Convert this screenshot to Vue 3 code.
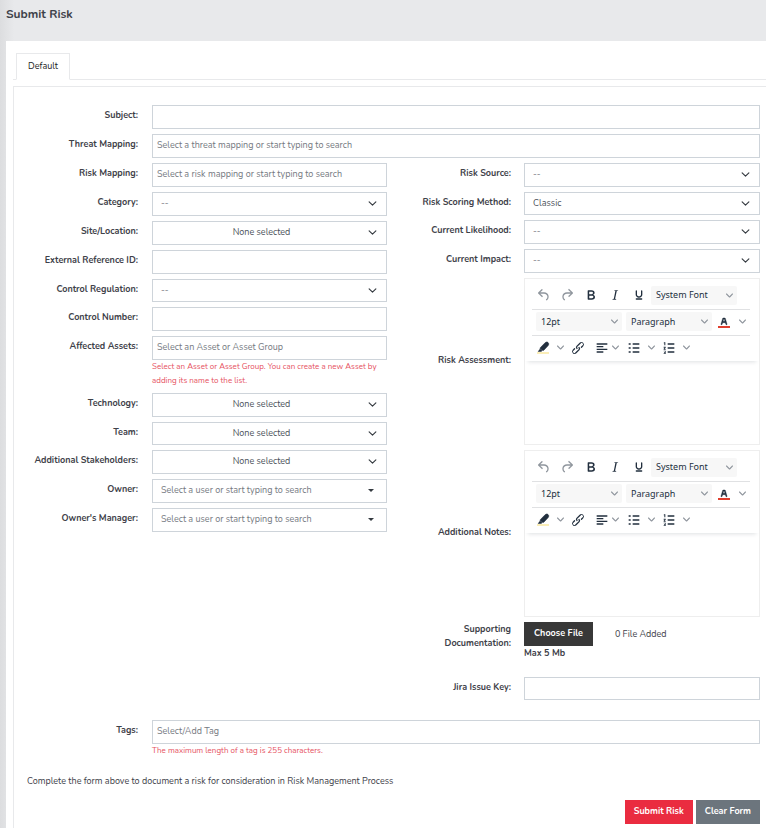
<script setup>
import { ref } from 'vue'

const leftFields = [
  { id: 'risk-mapping', label: 'Risk Mapping:', type: 'text', placeholder: 'Select a risk mapping or start typing to search' },
  { id: 'category', label: 'Category:', type: 'select', value: '--' },
  { id: 'site', label: 'Site/Location:', type: 'multi' },
  { id: 'reference', label: 'External Reference ID:', type: 'text' },
  { id: 'regulation', label: 'Control Regulation:', type: 'select', value: '--', compact: true },
  { id: 'control-number', label: 'Control Number:', type: 'text' },
  {
    id: 'assets',
    label: 'Affected Assets:',
    type: 'text',
    placeholder: 'Select an Asset or Asset Group',
    help: 'Select an Asset or Asset Group. You can create a new Asset by adding its name to the list.',
  },
  { id: 'technology', label: 'Technology:', type: 'multi' },
  { id: 'team', label: 'Team:', type: 'multi', compact: true },
  { id: 'stakeholders', label: 'Additional Stakeholders:', type: 'multi' },
  { id: 'owner', label: 'Owner:', type: 'combo', placeholder: 'Select a user or start typing to search' },
  { id: 'manager', label: "Owner's Manager:", type: 'combo', placeholder: 'Select a user or start typing to search' },
]

const rightFields = [
  { id: 'source', label: 'Risk Source:', value: '--' },
  { id: 'scoring', label: 'Risk Scoring Method:', value: 'Classic', compact: true },
  { id: 'likelihood', label: 'Current Likelihood:', value: '--' },
  { id: 'impact', label: 'Current Impact:', value: '--' },
]

const editors = [
  { id: 'assessment', label: 'Risk Assessment:' },
  { id: 'notes', label: 'Additional Notes:' },
]

const icons = {
  Undo: 'M6.4 8H12c3.7 0 6.2 2 6.8 5.1.6 2.7-.4 5.6-2.3 6.8a1 1 0 0 1-1-1.8c1.1-.6 1.8-2.7 1.4-4.6-.5-2.1-2.1-3.5-4.9-3.5H6.4l3.3 3.3a1 1 0 1 1-1.4 1.4l-5-5a1 1 0 0 1 0-1.4l5-5a1 1 0 0 1 1.4 1.4L6.4 8Z',
  Redo: 'M17.6 10H12c-2.8 0-4.4 1.4-4.9 3.5-.4 2 .3 4 1.4 4.6a1 1 0 1 1-1 1.8c-2-1.2-2.9-4.1-2.3-6.8.6-3 3-5.1 6.8-5.1h5.6l-3.3-3.3a1 1 0 1 1 1.4-1.4l5 5a1 1 0 0 1 0 1.4l-5 5a1 1 0 0 1-1.4-1.4l3.3-3.3Z',
  Bold: 'M7.8 19c-.3 0-.5 0-.6-.2l-.2-.5V5.7c0-.2 0-.4.2-.5l.6-.2h5c1.5 0 2.7.3 3.5 1 .7.6 1.1 1.4 1.1 2.5a3 3 0 0 1-.6 1.9c-.4.6-1 1-1.6 1.2.4.1.9.3 1.3.6s.8.7 1 1.2c.4.4.5 1 .5 1.6 0 1.3-.4 2.3-1.3 3-.8.7-2.1 1-3.8 1H7.8Zm5-8.3c.6 0 1.2-.1 1.6-.5.4-.3.6-.7.6-1.3 0-1.1-.8-1.7-2.3-1.7H9.3v3.5h3.4Zm.5 6c.7 0 1.3-.1 1.7-.4.4-.4.6-.9.6-1.5s-.2-1-.7-1.4c-.4-.3-1-.4-2-.4H9.4v3.8h4Z',
  Italic: 'm16.7 4.7-.1.9h-.3c-.6 0-1 0-1.4.3-.3.3-.4.6-.5 1.1l-2.1 9.8v.6c0 .5.4.8 1.4.8h.2l-.2.8H8l.2-.8h.2c1.1 0 1.8-.5 2-1.5l2-9.8.1-.5c0-.6-.4-.8-1.4-.8h-.3l.2-.9h5.8Z',
  Underline: 'M16 5c.6 0 1 .4 1 1v5.5a4 4 0 0 1-.4 1.8l-1 1.4a5.3 5.3 0 0 1-5.5 1 5 5 0 0 1-1.6-1c-.5-.4-.8-.9-1.1-1.4a4 4 0 0 1-.4-1.8V6c0-.6.4-1 1-1s1 .4 1 1v5.5c0 .3 0 .6.2 1l.6.7a3.3 3.3 0 0 0 2.2.8 3.4 3.4 0 0 0 2.2-.8c.3-.2.4-.5.6-.8l.2-.9V6c0-.6.4-1 1-1ZM8 17h8c.6 0 1 .4 1 1s-.4 1-1 1H8a1 1 0 0 1 0-2Z',
}
const basicTools = ['Undo', 'Redo', 'Bold', 'Italic', 'Underline']
const chevron = 'M8.7 2.2c.3-.3.8-.3 1 0 .4.4.4.9 0 1.2L5.7 7.8c-.3.3-.9.3-1.2 0L.2 3.4a.8.8 0 0 1 0-1.2c.3-.3.8-.3 1.1 0L5 6l3.7-3.8Z'

const fileCount = ref(0)
function onFiles(event) {
  fileCount.value = event.target.files.length
}
</script>

<template>
  <div class="page">
    <header class="page-head">
      <h1>Submit Risk</h1>
    </header>
    <main class="card">
      <nav class="tabs">
        <a class="tab" href="#default">Default</a>
      </nav>
      <form class="panel" @submit.prevent>
        <div class="row">
          <label for="subject">Subject:</label>
          <input id="subject" class="control" type="text" />
        </div>
        <div class="row">
          <label for="threat">Threat Mapping:</label>
          <input id="threat" class="control" type="text" placeholder="Select a threat mapping or start typing to search" />
        </div>

        <div class="columns">
          <div class="column">
            <div v-for="f in leftFields" :key="f.id" class="row">
              <label :for="f.id">{{ f.label }}</label>
              <div class="field">
                <input v-if="f.type === 'text'" :id="f.id" class="control" type="text" :placeholder="f.placeholder" />
                <div v-else-if="f.type === 'select'" class="picker">
                  <select :id="f.id" class="control" :class="{ compact: f.compact }">
                    <option>{{ f.value }}</option>
                  </select>
                  <svg class="arrow" viewBox="0 0 16 16"><path d="m2 5 6 6 6-6" /></svg>
                </div>
                <div v-else-if="f.type === 'multi'" class="picker">
                  <button :id="f.id" class="control multi" :class="{ compact: f.compact }" type="button">None selected</button>
                  <svg class="arrow" viewBox="0 0 16 16"><path d="m2 5 6 6 6-6" /></svg>
                </div>
                <div v-else class="picker">
                  <input :id="f.id" class="control combo" type="text" :placeholder="f.placeholder" />
                  <svg class="caret" viewBox="0 0 6 3"><path d="M0 0h6L3 3z" /></svg>
                </div>
                <p v-if="f.help" class="help">{{ f.help }}</p>
              </div>
            </div>
          </div>

          <div class="column right">
            <div v-for="f in rightFields" :key="f.id" class="row">
              <label :for="f.id">{{ f.label }}</label>
              <div class="picker">
                <select :id="f.id" class="control" :class="{ compact: f.compact }">
                  <option>{{ f.value }}</option>
                </select>
                <svg class="arrow" viewBox="0 0 16 16"><path d="m2 5 6 6 6-6" /></svg>
              </div>
            </div>

            <div v-for="e in editors" :key="e.id" class="row middle">
              <label :for="e.id">{{ e.label }}</label>
              <div class="editor">
                <div class="toolbar">
                  <div class="tools">
                    <button v-for="(name, i) in basicTools" :key="name" class="tool wide" :class="{ faded: i < 2 }" type="button" :aria-label="name">
                      <svg class="icon" viewBox="0 0 24 24"><path :d="icons[name]" /></svg>
                    </button>
                    <div class="mini">
                      <select aria-label="Font"><option>System Font</option></select>
                      <svg class="chev" viewBox="0 0 10 10"><path :d="chevron" /></svg>
                    </div>
                  </div>
                  <div class="tools spaced">
                    <div class="mini">
                      <select aria-label="Size"><option>12pt</option></select>
                      <svg class="chev" viewBox="0 0 10 10"><path :d="chevron" /></svg>
                    </div>
                    <div class="mini">
                      <select aria-label="Block"><option>Paragraph</option></select>
                      <svg class="chev" viewBox="0 0 10 10"><path :d="chevron" /></svg>
                    </div>
                    <button class="tool wide" type="button" aria-label="Text color">
                      <svg class="icon" viewBox="0 0 24 24">
                        <path d="M8.7 16h-.8a.5.5 0 0 1-.5-.6l2.7-9c.1-.3.3-.4.5-.4h2.8c.2 0 .4.1.5.4l2.7 9a.5.5 0 0 1-.5.6h-.8a.5.5 0 0 1-.4-.4l-.7-2.2c0-.3-.3-.4-.5-.4h-3.4c-.2 0-.4.1-.5.4l-.7 2.2c0 .3-.2.4-.4.4Zm2.6-7.6-.6 2a.5.5 0 0 0 .5.6h1.6a.5.5 0 0 0 .5-.6l-.6-2c0-.3-.3-.4-.5-.4h-.4c-.2 0-.4.1-.5.4Z" stroke="#222f3e" stroke-width=".6" />
                        <path d="M3 18h18v3H3z" fill="#e03e2d" />
                      </svg>
                    </button>
                    <button class="tool narrow" type="button" aria-label="Text color menu">
                      <svg class="chev" viewBox="0 0 10 10"><path :d="chevron" /></svg>
                    </button>
                  </div>
                  <div class="tools">
                    <button class="tool" type="button" aria-label="Highlight">
                      <svg class="icon" viewBox="0 0 24 24">
                        <path d="M3 18h18v3H3z" fill="#fbeeb8" />
                        <path d="M4 17.500 7.500 13l3.500 3.200-1.500 1.300Z" />
                        <path d="M8 11.500l6.500-6.700c1.700-1.700 3.500-2.300 5-1s1.300 3.200-.1 4.900l-6.200 6.500c-.6.6-1.500.6-2.100.1L8.200 13.400c-.6-.5-.7-1.300-.2-1.900Z" stroke="#222f3e" />
                      </svg>
                    </button>
                    <button class="tool narrow" type="button" aria-label="Highlight menu">
                      <svg class="chev" viewBox="0 0 10 10"><path :d="chevron" /></svg>
                    </button>
                    <button class="tool" type="button" aria-label="Link">
                      <svg class="icon" viewBox="0 0 24 24"><path d="M6.2 12.3a1 1 0 0 1 1.4 1.4l-2 2a2 2 0 1 0 2.6 2.8l4.8-4.8a1 1 0 0 0 0-1.4 1 1 0 1 1 1.4-1.3 2.9 2.9 0 0 1 0 4L9.6 20a3.9 3.9 0 0 1-5.5-5.5l2-2Zm11.6-.6a1 1 0 0 1-1.4-1.4l2-2a2 2 0 1 0-2.6-2.8L11 10.3a1 1 0 0 0 0 1.4A1 1 0 1 1 9.6 13a2.9 2.900 0 0 1 0-4L14.4 4a3.9 3.9 0 0 1 5.5 5.500l-2 2Z" /></svg>
                    </button>
                    <button class="tool align" type="button" aria-label="Align">
                      <svg class="icon" viewBox="0 0 24 24"><path d="M4 5h16v2H4zM4 9h10v2H4zM4 13h16v2H4zM4 17h10v2H4z" /></svg>
                      <svg class="chev" viewBox="0 0 10 10"><path :d="chevron" /></svg>
                    </button>
                    <button class="tool" type="button" aria-label="Bullet list">
                      <svg class="icon" viewBox="0 0 24 24"><path d="M4 5h3v2H4zM10 5h10v2H10zM4 11h3v2H4zM10 11h10v2H10zM4 17h3v2H4zM10 17h10v2H10z" /></svg>
                    </button>
                    <button class="tool narrow" type="button" aria-label="Bullet list menu">
                      <svg class="chev" viewBox="0 0 10 10"><path :d="chevron" /></svg>
                    </button>
                    <button class="tool" type="button" aria-label="Numbered list">
                      <svg class="icon" viewBox="0 0 24 24"><path d="M10 5h10v2H10zM10 11h10v2H10zM10 17h10v2H10zM5 3.500h1.500V8H5V5H4V4zM4 10h3v2l-1.500 1.500H7v1H4v-1.200l1.500-1.500H4zM4 16h3v5H4v-1h2v-1H4.500v-1H6v-1H4z" /></svg>
                    </button>
                    <button class="tool narrow" type="button" aria-label="Numbered list menu">
                      <svg class="chev" viewBox="0 0 10 10"><path :d="chevron" /></svg>
                    </button>
                  </div>
                </div>
                <textarea :id="e.id"></textarea>
              </div>
            </div>

            <div class="row">
              <label class="stacked" for="files">Supporting Documentation:</label>
              <div class="upload">
                <div class="upload-line">
                  <label class="btn dark" for="files">Choose File</label>
                  <input id="files" class="file-input" type="file" multiple @change="onFiles" />
                  <span>{{ fileCount }} File Added</span>
                </div>
                <strong>Max 5 Mb</strong>
              </div>
            </div>
            <div class="row">
              <label for="jira">Jira Issue Key:</label>
              <input id="jira" class="control compact" type="text" />
            </div>
          </div>
        </div>

        <div class="row tags">
          <label for="tags">Tags:</label>
          <div class="field">
            <input id="tags" class="control" type="text" placeholder="Select/Add Tag" />
            <p class="help">The maximum length of a tag is 255 characters.</p>
          </div>
        </div>

        <p class="note">Complete the form above to document a risk for consideration in Risk Management Process</p>
        <div class="actions">
          <button class="btn red" type="submit">Submit Risk</button>
          <button class="btn grey" type="reset">Clear Form</button>
        </div>
      </form>
    </main>
  </div>
</template>

<style>
body {
  margin: 0;
  background: #e8e9eb;
}
</style>

<style scoped>
* {
  box-sizing: border-box;
}
.page {
  min-height: 100vh;
  display: flex;
  flex-direction: column;
  padding-left: 6px;
  font: 9px/14px Nunito, Lato, sans-serif;
  color: #3e4149;
  background: linear-gradient(90deg, #dcdddf, #e8e9eb 14px);
}
.page-head {
  height: 41px;
  padding-top: 6px;
}
h1 {
  margin: 0;
  font-size: 12px;
  line-height: 16px;
  font-weight: 700;
}
.card {
  flex: 1;
  padding: 12px 0 0 7px;
  background: #fff;
}
.tabs {
  display: flex;
  padding-left: 3px;
  border-bottom: 1px solid #e8e9eb;
}
.tab {
  margin-bottom: -1px;
  padding: 5px 11px 6px;
  border: 1px solid #e8e9eb;
  border-bottom-color: #fff;
  background: #fff;
  color: #222;
  text-decoration: none;
}
.panel {
  display: flex;
  flex-direction: column;
  gap: 5px;
  margin-top: 6px;
  padding: 18px 6px 4px;
  border: solid #e8e9eb;
  border-width: 1px 0 0 1px;
}
.columns {
  display: grid;
  grid-template-columns: 367fr 368fr;
  gap: 5px;
}
.column {
  display: flex;
  flex-direction: column;
  gap: 5px;
  min-width: 0;
}
.row {
  display: grid;
  grid-template-columns: 118px minmax(0, 1fr);
  column-gap: 14px;
  align-items: start;
}
.right .row {
  grid-template-columns: 119px minmax(0, 1fr);
  column-gap: 13px;
}
.row > label {
  padding: 3px 0 3px 8px;
  text-align: right;
  font-weight: 700;
}
.row > .stacked {
  padding-top: 0;
}
.middle {
  align-items: center;
}
.middle > label {
  padding: 0 0 3px;
}
.control {
  display: block;
  width: 100%;
  height: 24px;
  margin: 0;
  padding: 0 8px 2px 4px;
  border: 1px solid #ced4da;
  border-radius: 0;
  background: #fff;
  font: inherit;
  color: #4c525a;
  appearance: none;
  outline: none;
}
.control::placeholder {
  color: #75797f;
  opacity: 1;
}
.compact {
  height: 23px;
}
select.control,
.combo {
  padding-left: 8px;
}
.multi {
  padding-right: 20px;
  text-align: center;
}
.picker,
.mini {
  position: relative;
}
.arrow,
.caret {
  position: absolute;
  pointer-events: none;
}
.arrow {
  top: 7px;
  right: 10px;
  width: 9px;
  height: 9px;
  fill: none;
  stroke: #343a40;
  stroke-width: 2;
  stroke-linecap: round;
  stroke-linejoin: round;
}
.caret {
  top: 10px;
  right: 13px;
  width: 6px;
  height: 3px;
  fill: #343a40;
}
.help {
  margin: 0;
  font-size: 8px;
  color: #e65060;
}
.editor {
  height: 167px;
  display: flex;
  flex-direction: column;
  border: 1px solid #eee;
}
.toolbar {
  padding: 4px 9px 0 7px;
  box-shadow: 0 4px 4px -3px rgba(34, 47, 62, 0.15);
}
.tools {
  display: flex;
  align-items: center;
  height: 26px;
  padding-bottom: 2px;
}
.tools + .tools {
  border-top: 1px solid #e0e1e3;
}
.spaced {
  padding-left: 4px;
}
.tool {
  flex: none;
  display: flex;
  align-items: center;
  justify-content: center;
  width: 22px;
  height: 20px;
  padding: 0;
  border: 0;
  background: none;
}
.wide {
  width: 24px;
}
.wide:first-child {
  width: 23px;
}
.narrow {
  width: 13px;
}
.align {
  width: 34px;
  gap: 2px;
}
.icon {
  width: 16px;
  height: 16px;
  fill: #222f3e;
}
.faded .icon {
  opacity: 0.5;
}
.chev {
  width: 7px;
  height: 7px;
  fill: #8f959d;
}
.mini {
  flex: none;
  width: 86px;
}
.mini + .mini {
  margin-left: 4px;
}
.mini select {
  display: block;
  width: 100%;
  height: 19px;
  padding: 0 5px;
  border: 0;
  border-radius: 2px;
  background: #f7f7f7;
  font: 9px/14px "Noto Sans", sans-serif;
  color: #222f3e;
  appearance: none;
}
.mini .chev {
  position: absolute;
  top: 6px;
  right: 4px;
  pointer-events: none;
}
textarea {
  flex: 1;
  width: 100%;
  margin-top: 4px;
  border: 0;
  resize: none;
  outline: none;
  background: none;
}
.upload {
  height: 50px;
}
.upload-line {
  display: flex;
  align-items: center;
  gap: 22px;
  position: relative;
}
.file-input {
  position: absolute;
  width: 1px;
  height: 1px;
  opacity: 0;
}
.btn {
  height: 24px;
  padding: 0 9px 2px;
  border: 0;
  font: inherit;
  font-weight: 700;
  line-height: 22px;
  color: #fff;
}
.dark {
  padding: 0 10px 2px;
  background: #383838;
}
.red {
  background: #ea2c40;
}
.grey {
  background: #6c757d;
}
.tags {
  margin-top: 15px;
}
.note {
  margin: 11px 0 0;
  padding-left: 7px;
}
.actions {
  display: flex;
  justify-content: flex-end;
  gap: 3px;
  margin-top: 7px;
}
</style>
